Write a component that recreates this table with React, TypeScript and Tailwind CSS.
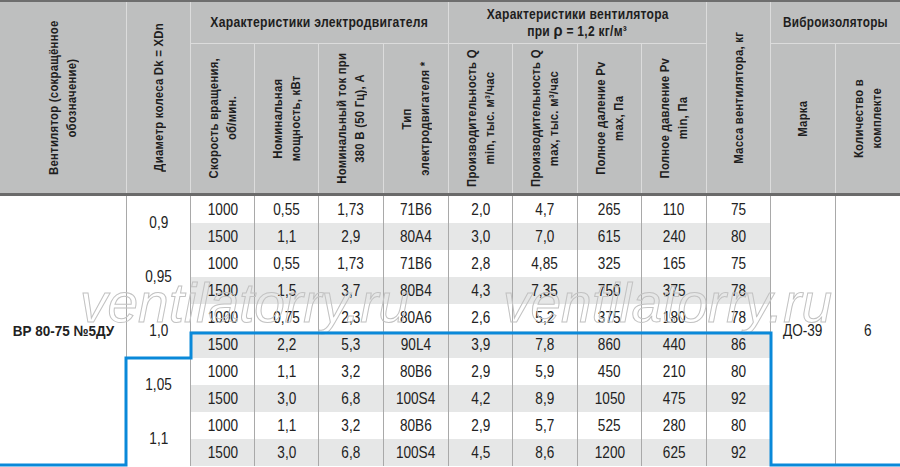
import React from 'react';

const cols =
  'grid-cols-[127px_64px_64px_64px_65px_65px_64px_65px_64px_65px_64px_65px_64px]';

const rows: string[][] = [
  ['1000', '0,55', '1,73', '71В6', '2,0', '4,7', '265', '110', '75'],
  ['1500', '1,1', '2,9', '80А4', '3,0', '7,0', '615', '240', '80'],
  ['1000', '0,55', '1,73', '71В6', '2,8', '4,85', '325', '165', '75'],
  ['1500', '1,5', '3,7', '80В4', '4,3', '7,35', '750', '375', '78'],
  ['1000', '0,75', '2,3', '80А6', '2,6', '5,2', '375', '180', '78'],
  ['1500', '2,2', '5,3', '90L4', '3,9', '7,8', '860', '440', '86'],
  ['1000', '1,1', '3,2', '80В6', '2,9', '5,9', '450', '210', '80'],
  ['1500', '3,0', '6,8', '100S4', '4,2', '8,9', '1050', '475', '92'],
  ['1000', '1,1', '3,2', '80В6', '2,9', '5,7', '525', '280', '80'],
  ['1500', '3,0', '6,8', '100S4', '4,5', '8,6', '1200', '625', '92'],
];

const diameters = ['0,9', '0,95', '1,0', '1,05', '1,1'];

const subHeaders: string[][] = [
  ['Скорость вращения,', 'об/мин.'],
  ['Номинальная', 'мощность, кВт'],
  ['Номинальный ток при', '380 В (50 Гц), А'],
  ['Тип', 'электродвигателя *'],
  ['Производительность Q', 'min, тыс. м³/час'],
  ['Производительность Q', 'max, тыс. м³/час'],
  ['Полное даление Pv', 'max, Па'],
  ['Полное давление Pv', 'min, Па'],
];

// rotated header text, reads bottom to top; scale-y narrows the glyphs like a condensed face
function Vertical({ lines }: { lines: string[] }) {
  return (
    <span className="[writing-mode:vertical-rl] rotate-180 scale-y-[0.87] text-center leading-[18px] whitespace-nowrap">
      {lines.map((l, i) => (
        <React.Fragment key={i}>
          {i > 0 && <br />}
          {l}
        </React.Fragment>
      ))}
    </span>
  );
}

function Narrow({ children, k = 'scale-x-[0.8]' }: { children: React.ReactNode; k?: string }) {
  return <span className={`inline-block whitespace-nowrap ${k}`}>{children}</span>;
}

export default function App() {
  const hcell = 'flex items-center justify-center border-r border-[#dcdcdc]';
  const bcell = 'flex items-center justify-center border-r border-[#a9a9a9]';

  return (
    <div className="relative w-[900px] h-[467px] overflow-hidden bg-white text-[#1e1e1e] font-['Liberation_Sans',sans-serif]">
      {/* header */}
      <div
        className={`grid ${cols} grid-rows-[42px_149px] bg-[#bebfbf] border-t-2 border-b-[3px] border-t-[#6e6e6e] border-b-[#6a6a6a] text-[13px] font-bold tracking-[0.3px]`}
      >
        <div className={`${hcell} row-span-2`}>
          <Vertical lines={['Вентилятор (сокращённое', 'обозначение)']} />
        </div>
        <div className={`${hcell} row-span-2`}>
          <Vertical lines={['Диаметр колеса Dk = XDn']} />
        </div>
        <div className={`${hcell} col-span-4 border-b text-[14px]`}>
          <Narrow k="scale-x-[0.87]">Характеристики электродвигателя</Narrow>
        </div>
        <div className={`${hcell} col-span-4 border-b flex-col leading-[16px] text-[14px]`}>
          <Narrow k="scale-x-[0.86]">Характеристики вентилятора</Narrow>
          <Narrow k="scale-x-[0.86]">
            при <span className="text-[17px] leading-none">ρ</span> = 1,2 кг/м³
          </Narrow>
        </div>
        <div className={`${hcell} row-span-2`}>
          <Vertical lines={['Масса вентилятора, кг']} />
        </div>
        <div className="col-span-2 flex items-center justify-center border-b border-[#dcdcdc] text-[14px]">
          <Narrow k="scale-x-[0.84]">Виброизоляторы</Narrow>
        </div>
        {subHeaders.map((h, i) => (
          <div key={i} className={hcell}>
            <Vertical lines={h} />
          </div>
        ))}
        <div className={hcell}>
          <Vertical lines={['Марка']} />
        </div>
        <div className="flex items-center justify-center">
          <Vertical lines={['Количество в', 'комплекте']} />
        </div>
      </div>

      {/* body */}
      <div className={`grid ${cols} grid-rows-[repeat(10,27px)] text-[17px] text-[#222]`}>
        {rows.map((r, i) => (
          <React.Fragment key={i}>
            {i === 0 && (
              <div className={`${bcell} row-span-10 font-bold text-[15px]`}>
                <Narrow k="scale-x-[0.9]">ВР 80-75 №5ДУ</Narrow>
              </div>
            )}
            {i % 2 === 0 && (
              <div className={`${bcell} row-span-2`}>
                <Narrow>{diameters[i / 2]}</Narrow>
              </div>
            )}
            {r.map((v, j) => (
              <div key={j} className={`${bcell} ${i % 2 === 1 ? 'bg-[#e6e7e7]' : ''}`}>
                <Narrow>{v}</Narrow>
              </div>
            ))}
            {i === 0 && (
              <>
                <div className={`${bcell} row-span-10`}>
                  <Narrow>ДО-39</Narrow>
                </div>
                <div className="row-span-10 flex items-center justify-center">
                  <Narrow>6</Narrow>
                </div>
              </>
            )}
          </React.Fragment>
        ))}
      </div>

      {/* watermark */}
      <div className="pointer-events-none absolute inset-x-0 top-[276px] text-[55px] italic leading-none text-transparent [-webkit-text-stroke:1px_#c2c2c2] font-['Liberation_Sans',sans-serif]">
        <span className="absolute left-[80px]">ventilatorry.ru</span>
        <span className="absolute left-[503px]">ventilatorry.ru</span>
      </div>

      {/* highlight outline */}
      <svg className="pointer-events-none absolute inset-0" width="900" height="467">
        <path
          d="M0 465 H126 V358 H191 V333 H771 V465 H900"
          fill="none"
          stroke="#0a89d9"
          strokeWidth="3"
        />
      </svg>
    </div>
  );
}
